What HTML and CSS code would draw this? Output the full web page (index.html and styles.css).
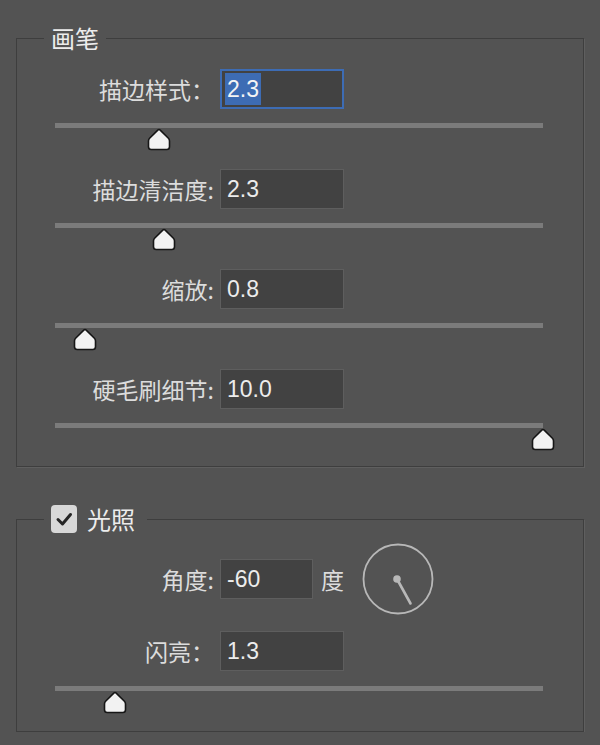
FILE: index.html
```html
<!DOCTYPE html>
<html lang="zh-CN">
<head>
  <meta charset="UTF-8" />
  <meta name="viewport" content="width=device-width, initial-scale=1" />
  <title>画笔</title>
  <link rel="stylesheet" href="styles.css">
</head>
<body>
  <fieldset class="group brush">
    <legend>画笔</legend>

    <div class="row first">
      <span class="label">描边样式：</span>
      <div class="box focus"><span class="sel">2.3</span></div>
    </div>
    <div class="slider">
      <div class="track"></div>
      <svg class="thumb" style="left:21.4%" viewBox="0 0 24 23" width="24" height="23"><path d="M12 1.5 Q12.6 1.5 13.2 2.1 L21.4 10.3 Q22.5 11.4 22.5 13 V18.8 Q22.5 21.5 19.8 21.5 H4.2 Q1.5 21.5 1.5 18.8 V13 Q1.5 11.4 2.6 10.3 L10.8 2.1 Q11.4 1.5 12 1.5 Z"/></svg>
    </div>

    <div class="row">
      <span class="label">描边清洁度:</span>
      <div class="box">2.3</div>
    </div>
    <div class="slider">
      <div class="track"></div>
      <svg class="thumb" style="left:22.3%" viewBox="0 0 24 23" width="24" height="23"><path d="M12 1.5 Q12.6 1.5 13.2 2.1 L21.4 10.3 Q22.5 11.4 22.5 13 V18.8 Q22.5 21.5 19.8 21.5 H4.2 Q1.5 21.5 1.5 18.8 V13 Q1.5 11.4 2.6 10.3 L10.8 2.1 Q11.4 1.5 12 1.5 Z"/></svg>
    </div>

    <div class="row">
      <span class="label">缩放:</span>
      <div class="box">0.8</div>
    </div>
    <div class="slider">
      <div class="track"></div>
      <svg class="thumb" style="left:6.2%" viewBox="0 0 24 23" width="24" height="23"><path d="M12 1.5 Q12.6 1.5 13.2 2.1 L21.4 10.3 Q22.5 11.4 22.5 13 V18.8 Q22.5 21.5 19.8 21.5 H4.2 Q1.5 21.5 1.5 18.8 V13 Q1.5 11.4 2.6 10.3 L10.8 2.1 Q11.4 1.5 12 1.5 Z"/></svg>
    </div>

    <div class="row">
      <span class="label">硬毛刷细节:</span>
      <div class="box">10.0</div>
    </div>
    <div class="slider">
      <div class="track"></div>
      <svg class="thumb" style="left:100%" viewBox="0 0 24 23" width="24" height="23"><path d="M12 1.5 Q12.6 1.5 13.2 2.1 L21.4 10.3 Q22.5 11.4 22.5 13 V18.8 Q22.5 21.5 19.8 21.5 H4.2 Q1.5 21.5 1.5 18.8 V13 Q1.5 11.4 2.6 10.3 L10.8 2.1 Q11.4 1.5 12 1.5 Z"/></svg>
    </div>
  </fieldset>

  <fieldset class="group light">
    <legend>
      <span class="check">
        <svg viewBox="0 0 26 28" width="26" height="28"><path d="M7 14.5 L11.5 19 L19.5 9.5"/></svg>
      </span>
      <span>光照</span>
    </legend>

    <div class="row angle">
      <span class="label">角度:</span>
      <div class="box short">-60</div>
      <span class="unit">度</span>
      <svg class="dial" viewBox="0 0 72 72" width="72" height="72">
        <circle cx="36" cy="36" r="34.5"/>
        <line x1="35" y1="36" x2="48.5" y2="60.5"/>
        <circle class="pin" cx="35" cy="36" r="3.8"/>
      </svg>
    </div>

    <div class="row shine">
      <span class="label">闪亮：</span>
      <div class="box">1.3</div>
    </div>
    <div class="slider">
      <div class="track"></div>
      <svg class="thumb" style="left:12.2%" viewBox="0 0 24 23" width="24" height="23"><path d="M12 1.5 Q12.6 1.5 13.2 2.1 L21.4 10.3 Q22.5 11.4 22.5 13 V18.8 Q22.5 21.5 19.8 21.5 H4.2 Q1.5 21.5 1.5 18.8 V13 Q1.5 11.4 2.6 10.3 L10.8 2.1 Q11.4 1.5 12 1.5 Z"/></svg>
    </div>
  </fieldset>
</body>
</html>
```

FILE: styles.css
```css
body {
  margin: 0;
  padding: 24px 16px 0 16px;
  background: #535353;
  color: #dedede;
  font-family: "Noto Sans CJK SC", "Liberation Sans", sans-serif;
}

.group {
  margin: 0;
  padding: 0 0 16px 0;
  border: 1px solid #3e3e3e;
  box-shadow: 1px 1px 0 #5f5f5f;
  min-width: 0;
}
.light {
  margin-top: 38px;
  padding-bottom: 18px;
}
legend {
  margin-left: 27px;
  padding: 0 7px;
  font-size: 24px;
  line-height: 28px;
  color: #ececec;
  display: flex;
  align-items: center;
  gap: 10px;
}
.light legend {
  padding-right: 12px;
}

.check {
  width: 26px;
  height: 28px;
  border-radius: 4px;
  background: #d8d8d8;
  display: block;
}
.check svg {
  display: block;
}
.check path {
  fill: none;
  stroke: #262626;
  stroke-width: 3;
  stroke-linecap: round;
  stroke-linejoin: round;
}

.row {
  display: flex;
  align-items: center;
  height: 40px;
  margin-top: 19px;
}
.row.first {
  margin-top: 17px;
}
.row.angle {
  margin-top: 26px;
}
.row.shine {
  margin-top: 32px;
}
.label {
  width: 197px;
  text-align: right;
  font-size: 23px;
  line-height: 40px;
  color: #dcdcdc;
  white-space: nowrap;
}
.box {
  box-sizing: border-box;
  margin-left: 6px;
  width: 124px;
  height: 40px;
  background: #424242;
  border: 1px solid #5e5e5e;
  padding-left: 6px;
  font-family: "Liberation Sans", Arial, sans-serif;
  font-size: 23px;
  line-height: 38px;
  color: #ececec;
}
.box.short {
  width: 93px;
}
.box.focus {
  border: 2px solid #3d6cb4;
  padding-left: 3px;
  padding-top: 2px;
  line-height: 32px;
}
.sel {
  display: inline-block;
  background: #3d6cb4;
  color: #f4f4f4;
  padding: 0 2px;
}

.unit {
  margin-left: 8px;
  font-size: 23px;
  color: #dcdcdc;
}
.dial {
  flex: none;
  margin-left: 18px;
}
.dial circle {
  fill: none;
  stroke: #b8b8b8;
  stroke-width: 1.8;
}
.dial line {
  stroke: #b8b8b8;
  stroke-width: 2.6;
  stroke-linecap: round;
}
.dial .pin {
  fill: #b8b8b8;
  stroke: none;
}

.slider {
  position: relative;
  margin: 14px 40px 0 38px;
  height: 27px;
}
.light .slider {
  margin-top: 15px;
}
.track {
  height: 5px;
  background: #7b7b7b;
}
.thumb {
  position: absolute;
  top: 5px;
  transform: translateX(-50%);
  display: block;
}
.thumb path {
  fill: #f2f2f2;
  stroke: #161616;
  stroke-width: 1.6;
}
```
